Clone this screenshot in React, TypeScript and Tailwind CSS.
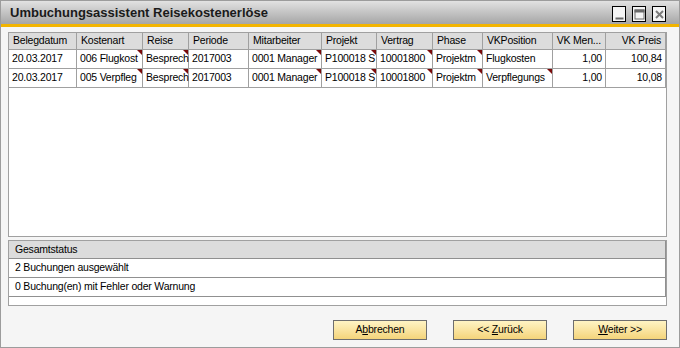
import React from "react";

const cols = [
  { w: 68, label: "Belegdatum", right: false },
  { w: 66, label: "Kostenart", right: false },
  { w: 46, label: "Reise", right: false },
  { w: 60, label: "Periode", right: false },
  { w: 73, label: "Mitarbeiter", right: false },
  { w: 55, label: "Projekt", right: false },
  { w: 56, label: "Vertrag", right: false },
  { w: 50, label: "Phase", right: false },
  { w: 70, label: "VKPosition", right: false },
  { w: 53, label: "VK Men...", right: true },
  { w: 60, label: "VK Preis", right: true },
];

const rows: { v: string; t?: boolean }[][] = [
  [
    { v: "20.03.2017" },
    { v: "006 Flugkost", t: true },
    { v: "Besprech", t: true },
    { v: "2017003" },
    { v: "0001 Manager", t: true },
    { v: "P100018 S", t: true },
    { v: "10001800", t: true },
    { v: "Projektm", t: true },
    { v: "Flugkosten" },
    { v: "1,00" },
    { v: "100,84" },
  ],
  [
    { v: "20.03.2017" },
    { v: "005 Verpfleg", t: true },
    { v: "Besprech", t: true },
    { v: "2017003" },
    { v: "0001 Manager", t: true },
    { v: "P100018 S", t: true },
    { v: "10001800", t: true },
    { v: "Projektm", t: true },
    { v: "Verpflegungs", t: true },
    { v: "1,00" },
    { v: "10,08" },
  ],
];

function Tri() {
  return (
    <svg className="absolute right-0 top-0" width="5" height="5" viewBox="0 0 5 5">
      <polygon points="0,0 5,0 5,5" fill="#7a0a0a" />
    </svg>
  );
}

function WinBtn({ kind }: { kind: "min" | "max" | "close" }) {
  return (
    <div className="w-[14px] h-[16px] border-[1.5px] border-black bg-[#f4f4f4] flex items-center justify-center">
      <svg width="11" height="13" viewBox="0 0 11 13">
        {kind === "min" && <rect x="1.5" y="9.5" width="8" height="2" fill="#6a6a6a" />}
        {kind === "max" && (
          <g>
            <rect x="1" y="2" width="9" height="9" fill="none" stroke="#6a6a6a" strokeWidth="1" />
            <rect x="0.5" y="1.5" width="10" height="3" fill="#6a6a6a" />
          </g>
        )}
        {kind === "close" && (
          <g stroke="#7a7a7a" strokeWidth="2">
            <line x1="2" y1="3" x2="9" y2="10" />
            <line x1="9" y1="3" x2="2" y2="10" />
          </g>
        )}
      </svg>
    </div>
  );
}

function Btn({ children }: { children: React.ReactNode }) {
  return (
    <div className="w-[94px] h-[20px] border border-[#6e6e6e] bg-gradient-to-b from-[#fff4c4] to-[#f4d47a] flex items-center justify-center text-[10.5px] tracking-[-0.2px] text-black whitespace-pre">
      {children}
    </div>
  );
}

export default function App() {
  return (
    <div
      className="w-[680px] h-[348px] border border-[#9c9c9c] bg-[#f5f5f5] flex flex-col text-black"
      style={{ fontFamily: "'Liberation Sans', Arial, sans-serif" }}
    >
      <div className="h-[26px] shrink-0 bg-gradient-to-b from-[#e2e2e2] to-[#a6a6a6] border-b-[3px] border-[#f2b400] flex items-center pl-[9px] pr-[13px]">
        <div className="text-[13px] font-bold text-[#1a1a1a] flex-1 pt-[1px]">Umbuchungsassistent Reisekostenerlöse</div>
        <div className="flex gap-[6px] pt-[3px]">
          <WinBtn kind="min" />
          <WinBtn kind="max" />
          <WinBtn kind="close" />
        </div>
      </div>

      <div className="flex-1 flex flex-col pl-[7px] pr-[12px] pt-[5px] text-[10.5px] tracking-[-0.2px]">
        <div className="w-[659px] h-[205px] border border-[#a0a0a0] bg-white flex flex-col">
          <div className="flex h-[17px] bg-[#dcdcdc]">
            {cols.map((c, i) => (
              <div
                key={i}
                style={{ width: c.w }}
                className={`shrink-0 border-r border-b border-[#a0a0a0] flex items-center px-[4px] whitespace-nowrap overflow-hidden ${c.right ? "justify-end" : ""}`}
              >
                {c.label}
              </div>
            ))}
          </div>
          {rows.map((r, ri) => (
            <div key={ri} className="flex h-[19px]">
              {r.map((cell, ci) => (
                <div
                  key={ci}
                  style={{ width: cols[ci].w }}
                  className={`relative shrink-0 border-r border-b border-[#a0a0a0] flex items-center whitespace-nowrap ${cols[ci].right ? "justify-end pr-[3px] pl-[2px]" : "pl-[3px] pr-[1px]"}`}
                >
                  {cell.v}
                  {cell.t && <Tri />}
                </div>
              ))}
            </div>
          ))}
        </div>

        <div className="mt-[3px] w-[659px] h-[66px] border border-[#a0a0a0] bg-white flex flex-col">
          <div className="h-[18px] bg-[#dcdcdc] border-b border-r border-[#909090] flex items-center pl-[6px]">Gesamtstatus</div>
          <div className="h-[19px] border-b border-r border-[#909090] flex items-center pl-[6px]">2 Buchungen ausgewählt</div>
          <div className="h-[19px] border-b border-r border-[#909090] flex items-center pl-[6px]">0 Buchung(en) mit Fehler oder Warnung</div>
        </div>

        <div className="mt-[14px] flex justify-end gap-[26px] w-[659px]">
          <Btn>
            A<span className="underline">b</span>brechen
          </Btn>
          <Btn>
            {"<< "}<span className="underline">Z</span>urück
          </Btn>
          <Btn>
            <span className="underline">W</span>{"eiter >>"}
          </Btn>
        </div>
      </div>
    </div>
  );
}
